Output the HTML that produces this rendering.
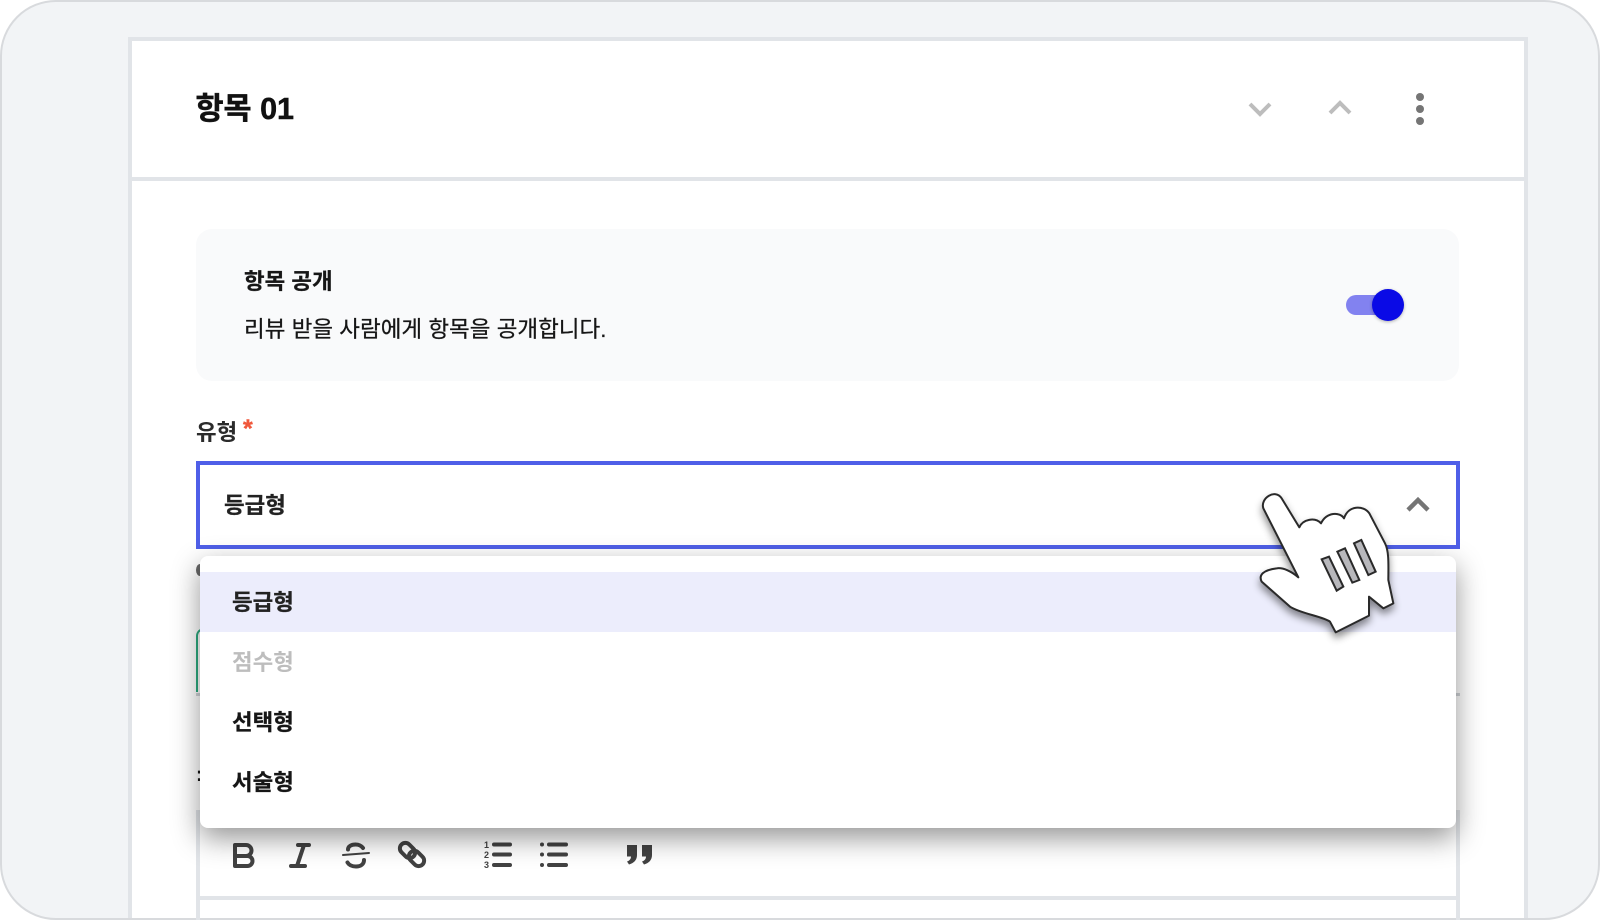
<!DOCTYPE html>
<html lang="ko"><head><meta charset="utf-8"><title>항목</title>
<style>
html,body{margin:0;padding:0;background:#fff}
#p{position:relative;width:1600px;height:920px;overflow:hidden;font-family:"Liberation Sans","Noto Sans CJK KR",sans-serif;color:#161616;filter:blur(.35px)}
#p div{position:absolute;box-sizing:border-box}
.t{white-space:nowrap;line-height:30px}
.b{-webkit-text-stroke:.25px currentColor}
svg{position:absolute;left:0;top:0}
</style></head><body>
<div id="p">
<div style="left:0;top:0;width:1600px;height:920px;background:#f2f4f6;border:2px solid #d8dadd;border-radius:56px"></div>
<div style="left:128px;top:37px;width:1400px;height:881px;background:#fff;border:4px solid #e1e4e8;border-bottom:0"></div>
<div style="left:132px;top:177px;width:1392px;height:4px;background:#e1e4e8"></div>
<div class="t" style="left:195.500px;top:94px;font-size:30.500px;font-weight:700;color:#111;-webkit-text-stroke:.5px #111">항목 01</div>
<div style="left:196px;top:229px;width:1263px;height:152px;background:#f9fafb;border-radius:16px"></div>
<div class="t b" style="left:244px;top:267px;font-size:22.400px;font-weight:700">항목 공개</div>
<div class="t" style="left:244px;top:315px;font-size:22.500px;font-weight:400;-webkit-text-stroke:.25px #161616">리뷰 받을 사람에게 항목을 공개합니다.</div>
<div style="left:1346px;top:295px;width:44px;height:20px;border-radius:10px;background:#8282f0"></div>
<div style="left:1372px;top:289px;width:32px;height:32px;border-radius:50%;background:#0a0ae6;box-shadow:0 1px 3px rgba(0,0,0,.3)"></div>
<div class="t" style="left:196px;top:418px;font-size:22.400px;font-weight:700;color:#2b2b2b">유형</div>
<div class="t" style="left:243px;top:414px;font-size:25px;font-weight:700;color:#f0583c;-webkit-text-stroke:.4px #f0583c">*</div>
<div style="left:196px;top:461px;width:1264px;height:88px;background:#fff;border:4px solid #4f5fe8"></div>
<div class="t b" style="left:224px;top:491px;font-size:22.400px;font-weight:700;color:#222">등급형</div>
<div style="left:196px;top:564px;width:8px;height:12px;border-radius:50%;background:#666"></div>
<div style="left:196px;top:628px;width:12px;height:64px;border-left:2.500px solid #2cab7f;border-top:2.500px solid #2cab7f;border-radius:8px 0 0 0"></div>
<div style="left:196px;top:693px;width:1264px;height:3px;background:#d0d3d7"></div>
<div style="left:196px;top:810px;width:1264px;height:110px;border:4px solid #e1e4e8;border-bottom:0"></div>
<div style="left:200px;top:896px;width:1256px;height:4px;background:#e1e4e8"></div>
<div class="t" style="left:196px;top:760px;font-size:20px;font-weight:700">:</div>
<svg width="1600" height="920" fill="none" stroke-linecap="round" stroke-linejoin="round">
<polyline points="1250,104 1260,114 1270,104" stroke="#bdbdbd" stroke-width="4" stroke-linecap="butt" stroke-linejoin="miter"/>
<polyline points="1330,113 1340,103 1350,113" stroke="#bdbdbd" stroke-width="4" stroke-linecap="butt" stroke-linejoin="miter"/>
<circle cx="1420" cy="97" r="4" fill="#757575"/><circle cx="1420" cy="109" r="4" fill="#757575"/><circle cx="1420" cy="121" r="4" fill="#757575"/>
<polyline points="1408,510 1418,500 1428,510" stroke="#757575" stroke-width="4.500" stroke-linecap="butt" stroke-linejoin="miter"/>
<g stroke="#424242" stroke-width="4">
<path d="M235 845H246a5.500 5.500 0 0 1 0 11H235ZM235 856H247.500a5 5 0 0 1 0 10H235Z"/>
<path d="M298 845H309M291 866H305M304 845L297 866"/>
<path d="M363 848c-1.500-2-4-3.500-7.500-3.500c-4.500 0-7.500 2-7.500 5M364 860c0 4-3 6.500-8 6.500c-4 0-7-1.500-8.500-4"/>
<path d="M343 855L369 853" stroke-width="2"/>
<rect x="399" y="845" width="17" height="11" rx="5.500" transform="rotate(45 407.500 850.500)"/>
<rect x="408" y="853" width="17" height="11" rx="5.500" transform="rotate(45 416.500 858.500)"/>
<path d="M494 844.500H510M494 854.500H510M494 865H510"/>
<path d="M549 844.500H566M549 854.500H566M549 865H566"/>
</g>
<circle cx="542" cy="844.500" r="2" fill="#424242"/><circle cx="542" cy="854.500" r="2" fill="#424242"/><circle cx="542" cy="865" r="2" fill="#424242"/>
<path fill="#424242" d="M627 845h10v10c0 5-3 8-8 9.500l-2-3c3-1 4-3 4-5h-4zM642 845h10v10c0 5-3 8-8 9.500l-2-3c3-1 4-3 4-5h-4z"/>
<text x="484" y="848" font-size="9" font-weight="700" fill="#424242" font-family="Liberation Sans">1</text>
<text x="484" y="858" font-size="9" font-weight="700" fill="#424242" font-family="Liberation Sans">2</text>
<text x="484" y="868" font-size="9" font-weight="700" fill="#424242" font-family="Liberation Sans">3</text>
</svg>
<div style="left:200px;top:556px;width:1256px;height:272px;background:#fff;border-radius:8px;box-shadow:0 10px 28px rgba(0,0,0,.42)"></div>
<div style="left:200px;top:572px;width:1256px;height:60px;background:#ecedfc"></div>
<div class="t b" style="left:232px;top:588px;font-size:22.400px;font-weight:700;color:#222">등급형</div>
<div class="t" style="left:232px;top:648px;font-size:22.400px;font-weight:700;color:#bdbdbd">점수형</div>
<div class="t b" style="left:232px;top:708px;font-size:22.400px;font-weight:700;color:#161616">선택형</div>
<div class="t b" style="left:232px;top:768px;font-size:22.400px;font-weight:700;color:#161616">서술형</div>
<svg width="260" height="180" viewBox="0 0 780 540" style="left:1220px;top:470px;filter:drop-shadow(0 5px 4px rgba(0,0,0,.45))">
<path fill="#fff" stroke="#2a2a2a" stroke-width="6" stroke-linejoin="round" d="M130 115C120 85 165 55 185 85L238 172C248 148 285 140 303 160C320 125 360 125 372 145C385 105 430 105 448 130L495 220C508 245 505 290 505 330L520 400L490 415L447 380L447 437L347 487L330 455C310 440 240 430 210 410L125 335C115 315 130 300 170 295C190 292 215 305 235 322Z"/>
<g fill="#b8b8bc" stroke="#2a2a2a" stroke-width="6" stroke-linejoin="miter">
<path d="M305 268L327 260L370 350L350 362Z"/>
<path d="M352 245L375 235L418 330L397 338Z"/>
<path d="M402 220L424 210L467 305L445 315Z"/>
</g>
</svg>
</div>
</body></html>
